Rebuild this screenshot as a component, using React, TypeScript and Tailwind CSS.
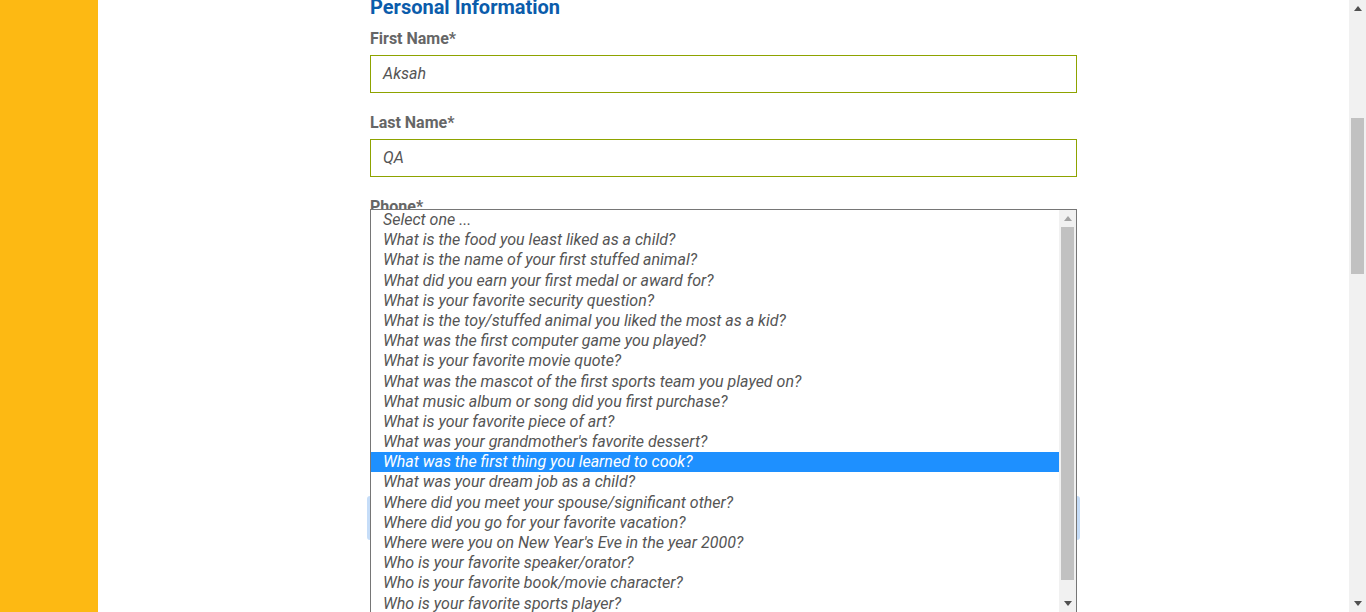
import React from "react";

const questions = [
  "Select one ...",
  "What is the food you least liked as a child?",
  "What is the name of your first stuffed animal?",
  "What did you earn your first medal or award for?",
  "What is your favorite security question?",
  "What is the toy/stuffed animal you liked the most as a kid?",
  "What was the first computer game you played?",
  "What is your favorite movie quote?",
  "What was the mascot of the first sports team you played on?",
  "What music album or song did you first purchase?",
  "What is your favorite piece of art?",
  "What was your grandmother's favorite dessert?",
  "What was the first thing you learned to cook?",
  "What was your dream job as a child?",
  "Where did you meet your spouse/significant other?",
  "Where did you go for your favorite vacation?",
  "Where were you on New Year's Eve in the year 2000?",
  "Who is your favorite speaker/orator?",
  "Who is your favorite book/movie character?",
  "Who is your favorite sports player?",
];

const SELECTED = 12;

function Arrow({ up, color }: { up?: boolean; color: string }) {
  return (
    <svg width="8" height="5" viewBox="0 0 8 5">
      {up ? (
        <polygon points="4,0 8,5 0,5" fill={color} />
      ) : (
        <polygon points="0,0 8,0 4,5" fill={color} />
      )}
    </svg>
  );
}

function TextField({ label, value }: { label: string; value: string }) {
  return (
    <div className="flex flex-col">
      <label className="text-[16px] font-bold leading-[19px] text-[#666]">{label}</label>
      <div className="mt-[7px] flex h-[38px] items-center border border-[#8ea300] px-[12px] text-[16px] italic text-[#555]">
        {value}
      </div>
    </div>
  );
}

export default function App() {
  return (
    <div
      className="flex h-[612px] w-[1366px] overflow-hidden bg-white"
      style={{ fontFamily: "Roboto, 'Liberation Sans', sans-serif" }}
    >
      {/* yellow rail */}
      <div className="w-[98px] shrink-0 bg-[#fdb913]" />

      {/* form column */}
      <div className="flex-1 pl-[272px]">
        <div className="flex w-[707px] flex-col">
          <h2 className="mt-[-5px] text-[20px] font-bold leading-[24px] text-[#0b5cab]">
            Personal Information
          </h2>

          <div className="mt-[10px] flex flex-col gap-[20px]">
            <TextField label="First Name*" value="Aksah" />
            <TextField label="Last Name*" value="QA" />

            {/* phone field with the open question list over it */}
            <div className="relative flex flex-col">
              <label className="text-[16px] font-bold leading-[19px] text-[#666]">Phone*</label>
              <div className="mt-[7px] h-[38px] border border-[#8ea300]" />

              <div className="mt-[235px] ml-[-3px] h-[44px] w-[713px] rounded-[3px] bg-[#c6ddf8]" />

              <div className="absolute left-0 top-[12px] z-10 flex h-[404px] w-[707px] border border-[#767676] bg-white">
                <ul className="flex-1">
                  {questions.map((q, i) => (
                    <li
                      key={q}
                      className={
                        i === SELECTED
                          ? "h-[20.2px] bg-[#1e90ff] pl-[12px] text-[16px] italic leading-[20.2px] text-white"
                          : "h-[20.2px] pl-[12px] text-[16px] italic leading-[20.2px] text-[#555]"
                      }
                    >
                      {q}
                    </li>
                  ))}
                </ul>
                {/* list scrollbar */}
                <div className="flex w-[17px] flex-col bg-[#f1f1f1]">
                  <div className="flex h-[17px] items-center justify-center">
                    <Arrow up color="#a3a3a3" />
                  </div>
                  <div className="mx-[2px] h-[353px] bg-[#c1c1c1]" />
                  <div className="flex-1" />
                  <div className="flex h-[17px] items-center justify-center">
                    <Arrow color="#505050" />
                  </div>
                </div>
              </div>
            </div>
          </div>
        </div>
      </div>

      {/* page scrollbar */}
      <div className="flex w-[17px] shrink-0 flex-col bg-[#f1f1f1]">
        <div className="flex h-[17px] items-center justify-center">
          <Arrow up color="#505050" />
        </div>
        <div className="mx-[2px] mt-[101px] h-[156px] bg-[#c1c1c1]" />
        <div className="flex-1" />
        <div className="flex h-[17px] items-center justify-center">
          <Arrow color="#505050" />
        </div>
      </div>
    </div>
  );
}
